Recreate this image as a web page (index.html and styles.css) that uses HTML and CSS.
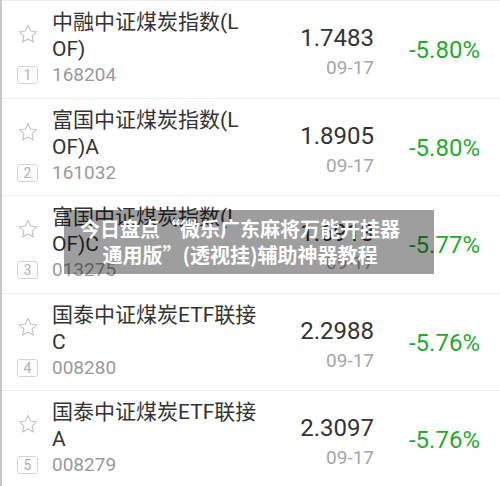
FILE: index.html
```html
<!DOCTYPE html>
<html lang="zh">
<head>
<meta charset="utf-8">
<link rel="stylesheet" href="styles.css">
</head>
<body>
<div class="page">
  <div class="list">
    <div class="row">
      <div class="lead">
        <svg class="star" viewBox="0 0 24 24"><path d="M12 2.6l2.8 6.2 6.7.7-5 4.6 1.4 6.7L12 17.4l-5.9 3.4 1.4-6.7-5-4.6 6.7-.7z"/></svg>
        <span class="rank">1</span>
      </div>
      <div class="name">
        <span class="line">中融中证煤炭指数(L</span>
        <span class="line">OF)</span>
        <span class="code">168204</span>
      </div>
      <div class="quote">
        <span class="price">1.7483</span>
        <span class="date">09-17</span>
      </div>
      <div class="pct">-5.80%</div>
    </div>
    <div class="row">
      <div class="lead">
        <svg class="star" viewBox="0 0 24 24"><path d="M12 2.6l2.8 6.2 6.7.7-5 4.6 1.4 6.7L12 17.4l-5.9 3.4 1.4-6.7-5-4.6 6.7-.7z"/></svg>
        <span class="rank">2</span>
      </div>
      <div class="name">
        <span class="line">富国中证煤炭指数(L</span>
        <span class="line">OF)A</span>
        <span class="code">161032</span>
      </div>
      <div class="quote">
        <span class="price">1.8905</span>
        <span class="date">09-17</span>
      </div>
      <div class="pct">-5.80%</div>
    </div>
    <div class="row">
      <div class="lead">
        <svg class="star" viewBox="0 0 24 24"><path d="M12 2.6l2.8 6.2 6.7.7-5 4.6 1.4 6.7L12 17.4l-5.9 3.4 1.4-6.7-5-4.6 6.7-.7z"/></svg>
        <span class="rank">3</span>
      </div>
      <div class="name">
        <span class="line">富国中证煤炭指数(L</span>
        <span class="line">OF)C</span>
        <span class="code">013275</span>
      </div>
      <div class="quote">
        <span class="price">1.6913</span>
        <span class="date">09-17</span>
      </div>
      <div class="pct">-5.77%</div>
    </div>
    <div class="row">
      <div class="lead">
        <svg class="star" viewBox="0 0 24 24"><path d="M12 2.6l2.8 6.2 6.7.7-5 4.6 1.4 6.7L12 17.4l-5.9 3.4 1.4-6.7-5-4.6 6.7-.7z"/></svg>
        <span class="rank">4</span>
      </div>
      <div class="name">
        <span class="line">国泰中证煤炭ETF联接</span>
        <span class="line">C</span>
        <span class="code">008280</span>
      </div>
      <div class="quote">
        <span class="price">2.2988</span>
        <span class="date">09-17</span>
      </div>
      <div class="pct">-5.76%</div>
    </div>
    <div class="row">
      <div class="lead">
        <svg class="star" viewBox="0 0 24 24"><path d="M12 2.6l2.8 6.2 6.7.7-5 4.6 1.4 6.7L12 17.4l-5.9 3.4 1.4-6.7-5-4.6 6.7-.7z"/></svg>
        <span class="rank">5</span>
      </div>
      <div class="name">
        <span class="line">国泰中证煤炭ETF联接</span>
        <span class="line">A</span>
        <span class="code">008279</span>
      </div>
      <div class="quote">
        <span class="price">2.3097</span>
        <span class="date">09-17</span>
      </div>
      <div class="pct">-5.76%</div>
    </div>
  </div>
  <div class="banner">
    <span>今日盘点“微乐广东麻将万能开挂器</span>
    <span>通用版”(透视挂)辅助神器教程</span>
  </div>
</div>
</body>
</html>
```
FILE: styles.css
```css
* { box-sizing: border-box; }
html, body {
  margin: 0;
  padding: 0;
  background: #fff;
}
body {
  font-family: Roboto, "Noto Sans CJK SC", sans-serif;
  width: 500px;
  height: 486px;
  overflow: hidden;
}
.page {
  position: relative;
  height: 486px;
  border-left: 2px solid #c6c6c6;
}
.list {
  display: flex;
  flex-direction: column;
}
.row {
  display: flex;
  height: 97.6px;
  flex: none;
  border-top: 1px solid #ededed;
}
.lead {
  width: 50px;
  flex: none;
  display: flex;
  flex-direction: column;
  align-items: center;
  padding-left: 1px;
}
.star {
  width: 22px;
  height: 22px;
  margin-top: 22px;
  fill: none;
  stroke: #c2c2c2;
  stroke-width: 1.2;
  stroke-linejoin: round;
}
.rank {
  margin-top: 21px;
  width: 21px;
  height: 18px;
  border: 1px solid #d4d4d4;
  border-radius: 3px;
  color: #b0b0b0;
  font-size: 14px;
  line-height: 16px;
  text-align: center;
}
.name {
  width: 212px;
  flex: none;
  display: flex;
  flex-direction: column;
  padding-top: 8px;
  color: #333;
  white-space: nowrap;
}
.line {
  font-size: 21px;
  line-height: 27px;
}
.code {
  font-size: 19px;
  line-height: 24px;
  color: #9a9a9a;
}
.quote {
  width: 110px;
  flex: none;
  display: flex;
  flex-direction: column;
  align-items: flex-end;
  padding-top: 22px;
}
.price {
  font-size: 24px;
  line-height: 30px;
  color: #333;
}
.date {
  font-size: 19px;
  line-height: 30px;
  color: #a6a6a6;
}
.pct {
  width: 106px;
  flex: none;
  padding-top: 34px;
  font-size: 24px;
  line-height: 30px;
  color: #1fab2e;
  text-align: right;
}
.banner {
  position: absolute;
  left: 62px;
  top: 210px;
  width: 370px;
  height: 64px;
  background: rgba(0, 0, 0, 0.38);
  display: flex;
  flex-direction: column;
  align-items: center;
  justify-content: center;
  padding-right: 18px;
  color: #fff;
  font-family: "Noto Sans CJK SC", sans-serif;
  font-weight: 700;
  font-size: 20px;
  line-height: 26px;
  white-space: nowrap;
}
```
